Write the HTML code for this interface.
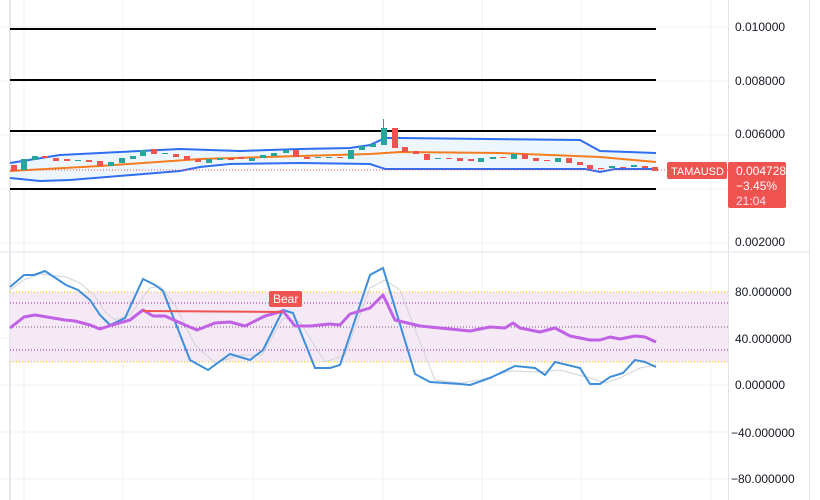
<!DOCTYPE html>
<html><head><meta charset="utf-8"><style>
html,body{margin:0;padding:0;background:#fff;width:820px;height:500px;overflow:hidden;font-family:"Liberation Sans",sans-serif}
</style></head><body>
<svg width="820" height="500" viewBox="0 0 820 500" xmlns="http://www.w3.org/2000/svg" font-family="Liberation Sans, sans-serif">
<g stroke="#eef0f3" stroke-width="1">
<line x1="24" y1="0" x2="24" y2="500"/><line x1="123" y1="0" x2="123" y2="500"/><line x1="253" y1="0" x2="253" y2="500"/><line x1="383" y1="0" x2="383" y2="500"/><line x1="482" y1="0" x2="482" y2="500"/><line x1="581" y1="0" x2="581" y2="500"/><line x1="711" y1="0" x2="711" y2="500"/>
<line x1="0" y1="27" x2="728" y2="27"/><line x1="0" y1="81" x2="728" y2="81"/><line x1="0" y1="135" x2="728" y2="135"/><line x1="0" y1="189" x2="728" y2="189"/><line x1="0" y1="243" x2="728" y2="243"/>
<line x1="0" y1="338" x2="728" y2="338"/><line x1="0" y1="385" x2="728" y2="385"/><line x1="0" y1="432" x2="728" y2="432"/><line x1="0" y1="479" x2="728" y2="479"/>
</g>
<line x1="10" y1="0" x2="10" y2="500" stroke="#e6e8ee" stroke-width="2"/>
<line x1="0" y1="252" x2="810" y2="252" stroke="#e0e3eb" stroke-width="1"/>
<line x1="728.5" y1="0" x2="728.5" y2="500" stroke="#e0e3eb"/>
<line x1="809.5" y1="0" x2="809.5" y2="500" stroke="#e0e3eb"/>
<g stroke="#000" stroke-width="2"><line x1="10" y1="29" x2="656" y2="29"/><line x1="10" y1="80" x2="656" y2="80"/><line x1="10" y1="131" x2="656" y2="131"/><line x1="10" y1="189" x2="656" y2="189"/></g>
<path d="M10,163 L60,155 L120,152 L180,149 L240,151 L300,149 L350,148 L370,145 L385,138 L400,138 L580,140 L600,151 L656,153 L656,169 L600,172 L585,169 L385,169 L370,164 L300,163 L230,164 L200,167 L180,171 L70,180 L40,181 L10,178 Z" fill="#eef6fd"/>
<polyline points="10,163 60,155 120,152 180,149 240,151 300,149 350,148 370,145 385,138 400,138 580,140 600,151 656,153" fill="none" stroke="#2f6ef0" stroke-width="2"/>
<polyline points="10,178 40,181 70,180 180,171 200,167 230,164 300,163 370,164 385,169 585,169 600,172 615,169 656,169" fill="none" stroke="#2f6ef0" stroke-width="2"/>
<polyline points="10,171 100,166 200,159 300,156 370,154 400,152 500,153 600,157 656,162" fill="none" stroke="#f57c1f" stroke-width="2"/>
<line x1="10" y1="170" x2="728" y2="170" stroke="#ef5350" stroke-dasharray="1,2"/>
<g>
<rect x="11" y="165" width="6" height="6" fill="#ef5350"/>
<rect x="21" y="159" width="6" height="11" fill="#26a69a"/>
<rect x="32" y="156" width="6" height="4" fill="#26a69a"/>
<rect x="42" y="156" width="6" height="2" fill="#ef5350"/>
<rect x="53" y="158" width="6" height="3" fill="#ef5350"/>
<rect x="64" y="159" width="6" height="2" fill="#ef5350"/>
<rect x="75" y="160" width="6" height="1" fill="#26a69a"/>
<rect x="86" y="160" width="6" height="2" fill="#ef5350"/>
<rect x="97" y="161" width="6" height="5" fill="#ef5350"/>
<rect x="108" y="162" width="6" height="4" fill="#26a69a"/>
<rect x="119" y="158" width="6" height="5" fill="#26a69a"/>
<rect x="130" y="156" width="6" height="3" fill="#26a69a"/>
<rect x="140" y="150" width="6" height="6" fill="#26a69a"/>
<rect x="151" y="149" width="6" height="5" fill="#ef5350"/>
<rect x="162" y="153" width="6" height="1" fill="#26a69a"/>
<rect x="173" y="154" width="6" height="3" fill="#ef5350"/>
<rect x="184" y="156" width="6" height="4" fill="#ef5350"/>
<rect x="195" y="159" width="6" height="3" fill="#ef5350"/>
<rect x="206" y="159" width="6" height="4" fill="#26a69a"/>
<rect x="217" y="158" width="6" height="2" fill="#26a69a"/>
<rect x="228" y="158" width="6" height="2" fill="#ef5350"/>
<rect x="238" y="157" width="6" height="2" fill="#ef5350"/>
<rect x="249" y="158" width="6" height="3" fill="#26a69a"/>
<rect x="260" y="155" width="6" height="3" fill="#26a69a"/>
<rect x="271" y="153" width="6" height="3" fill="#26a69a"/>
<rect x="283" y="150" width="6" height="3" fill="#26a69a"/>
<rect x="293" y="150" width="6" height="7" fill="#ef5350"/>
<rect x="304" y="157" width="6" height="2" fill="#ef5350"/>
<rect x="315" y="157" width="6" height="1" fill="#26a69a"/>
<rect x="326" y="157" width="6" height="1" fill="#26a69a"/>
<rect x="337" y="157" width="6" height="1" fill="#ef5350"/>
<rect x="348" y="150" width="6" height="9" fill="#26a69a"/>
<rect x="359" y="146" width="6" height="4" fill="#26a69a"/>
<rect x="370" y="144" width="6" height="3" fill="#26a69a"/>
<line x1="383.5" y1="119" x2="383.5" y2="145" stroke="#26a69a"/>
<rect x="381" y="128" width="6" height="17" fill="#26a69a"/>
<rect x="392" y="128" width="6" height="20" fill="#ef5350"/>
<rect x="402" y="147" width="6" height="5" fill="#ef5350"/>
<rect x="413" y="151" width="6" height="3" fill="#ef5350"/>
<rect x="424" y="154" width="6" height="6" fill="#ef5350"/>
<rect x="435" y="158" width="6" height="1" fill="#26a69a"/>
<rect x="446" y="158" width="6" height="1" fill="#ef5350"/>
<rect x="457" y="158" width="6" height="3" fill="#ef5350"/>
<rect x="468" y="159" width="6" height="2" fill="#ef5350"/>
<rect x="478" y="158" width="6" height="4" fill="#26a69a"/>
<rect x="490" y="157" width="6" height="2" fill="#26a69a"/>
<rect x="500" y="157" width="6" height="1" fill="#ef5350"/>
<rect x="511" y="154" width="6" height="5" fill="#26a69a"/>
<rect x="522" y="154" width="6" height="5" fill="#ef5350"/>
<rect x="533" y="158" width="6" height="3" fill="#ef5350"/>
<rect x="544" y="160" width="6" height="1" fill="#ef5350"/>
<rect x="555" y="158" width="6" height="4" fill="#26a69a"/>
<rect x="566" y="158" width="6" height="5" fill="#ef5350"/>
<rect x="577" y="162" width="6" height="3" fill="#ef5350"/>
<rect x="587" y="165" width="6" height="4" fill="#ef5350"/>
<rect x="598" y="168" width="6" height="1" fill="#ef5350"/>
<rect x="609" y="166" width="6" height="2" fill="#26a69a"/>
<rect x="620" y="167" width="6" height="1" fill="#ef5350"/>
<rect x="631" y="165" width="6" height="2" fill="#26a69a"/>
<rect x="642" y="166" width="6" height="2" fill="#ef5350"/>
<rect x="652" y="167" width="6" height="4" fill="#ef5350"/>
</g>
<g font-size="12" fill="#131722">
<text x="735" y="31">0.010000</text><text x="735" y="85">0.008000</text><text x="735" y="138">0.006000</text><text x="735" y="246">0.002000</text>
<text x="735" y="296">80.000000</text><text x="735" y="343">40.000000</text><text x="735" y="389">0.000000</text><text x="731" y="437">−40.000000</text><text x="731" y="483">−80.000000</text>
</g>
<rect x="667" y="162" width="60" height="17" rx="2" fill="#ef5350"/>
<text x="671" y="175" font-size="11" fill="#fff">TAMAUSD</text>
<rect x="728" y="162" width="58" height="46" rx="2" fill="#ef5350"/>
<text x="736" y="175" font-size="12" fill="#fff">0.004728</text>
<text x="736" y="190" font-size="12" fill="#fff">−3.45%</text>
<text x="736" y="205" font-size="12" fill="#fde">21:04</text>
<rect x="10" y="292" width="718" height="70" fill="#f3e5f5" opacity="0.85"/>
<g stroke-width="1" stroke-dasharray="1,2">
<line x1="10" y1="292" x2="728" y2="292" stroke="#f5c400"/>
<line x1="10" y1="362" x2="728" y2="362" stroke="#f5c400"/>
<line x1="10" y1="303" x2="728" y2="303" stroke="#9c27b0"/>
<line x1="10" y1="327" x2="728" y2="327" stroke="#7a5a80"/>
<line x1="10" y1="350" x2="728" y2="350" stroke="#9c27b0"/>
</g>
<polyline points="10,290 24,280 40,274 66,277 80,283 95,296 105,312 115,320 130,315 150,288 160,286 175,305 195,345 215,363 240,355 262,355 283,318 300,322 325,362 345,355 370,288 385,280 400,290 420,342 435,380 460,383 480,380 510,371 540,372 560,370 590,378 605,383 620,378 640,368 656,365" fill="none" stroke="#d0d3d8" stroke-width="1"/>
<polyline points="10,287 24,275 34,275 45,271 66,285 78,290 90,300 100,315 110,325 125,318 143,279 155,285 163,291 190,360 208,370 230,354 250,360 263,350 283,310 293,313 315,368 330,368 340,365 370,275 383,268 415,374 430,382 460,384 470,385 490,378 515,366 535,368 545,375 555,362 580,368 590,384 600,384 610,377 623,373 635,360 645,362 656,367" fill="none" stroke="#3d8fdc" stroke-width="2"/>
<polyline points="10,328 24,317 35,315 65,320 75,321 90,325 100,329 112,325 130,320 143,310 153,316 165,316 185,325 197,330 215,323 230,322 245,326 265,316 283,311 295,326 310,326 330,324 340,325 350,314 370,308 383,295 395,320 420,326 440,328 470,331 490,327 505,328 513,323 520,328 540,332 555,328 570,336 590,340 600,340 610,337 620,339 635,336 645,337 656,342" fill="none" stroke="#c061e6" stroke-width="3" stroke-linejoin="round"/>
<line x1="143" y1="311" x2="283" y2="312" stroke="#ef5350" stroke-width="2"/>
<rect x="269" y="291" width="33" height="16" rx="2" fill="#ef5350"/>
<text x="273" y="303" font-size="12" fill="#fff">Bear</text>
</svg>
</body></html>
